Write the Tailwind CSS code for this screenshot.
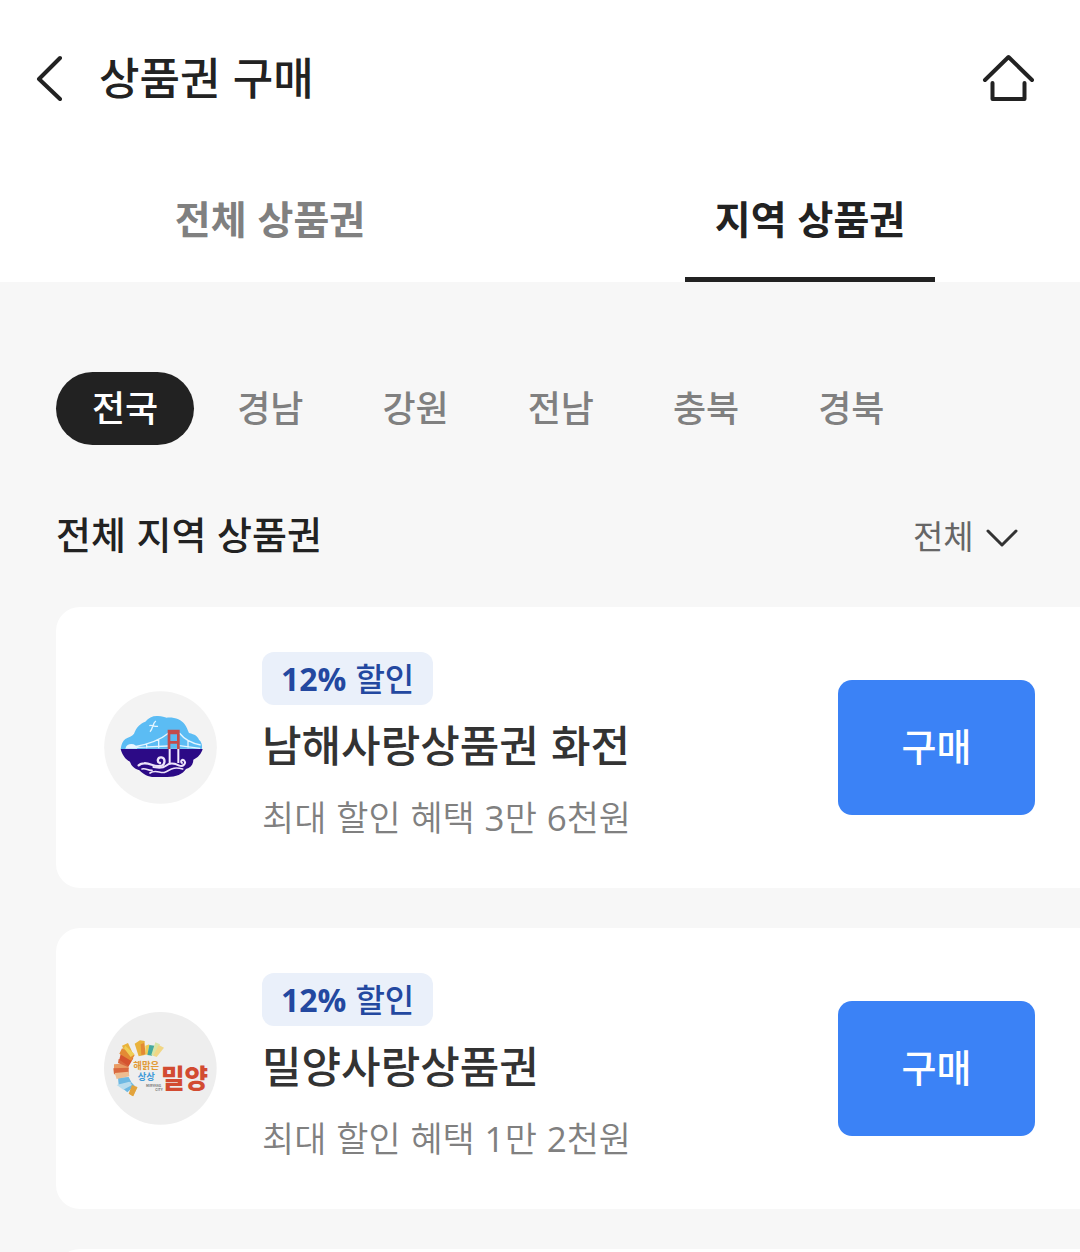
<!DOCTYPE html>
<html lang="ko">
    <head>
        <meta charset="utf-8" />
        <meta name="viewport" content="width=device-width, initial-scale=1" />
        <title>상품권 구매</title>
        <script src="https://cdn.jsdelivr.net/npm/@tailwindcss/browser@4"></script>
    </head>
    <body class="h-screen overflow-hidden bg-[#f7f7f7] font-['Noto_Sans_CJK_KR',sans-serif] text-[#222]">
        <header class="bg-white">
            <div class="flex items-center justify-between pt-10 pr-[45px] pl-9">
                <div class="flex items-center gap-[35px]">
                    <button type="button" aria-label="뒤로">
                        <svg class="h-[46px] w-7" viewBox="0 0 28 46" fill="none" stroke="#222" stroke-width="4" stroke-linecap="round" stroke-linejoin="round">
                            <path d="M24 3 3 24l21 20" />
                        </svg>
                    </button>
                    <h1 class="pb-1 text-[44px] leading-[72px] font-medium">상품권 구매</h1>
                </div>
                <a href="#" aria-label="홈">
                    <svg class="h-12 w-[54px]" viewBox="0 0 54 48" fill="none" stroke="#222" stroke-width="4" stroke-linecap="round" stroke-linejoin="round">
                        <path d="M4 26 27.500 3 51 26" />
                        <path d="M11.500 29v16h32V29" />
                    </svg>
                </a>
            </div>
            <nav class="grid grid-cols-2 pt-[41px]">
                <a href="#" class="flex justify-center text-[39px] font-bold text-[#808080]">
                    <span class="h-[125px] w-[250px] border-b-[5px] border-transparent text-center leading-[120px]">전체 상품권</span>
                </a>
                <a href="#" aria-current="page" class="flex justify-center text-[39px] font-bold">
                    <span class="h-[125px] w-[250px] border-b-[5px] border-[#222] text-center leading-[120px]">지역 상품권</span>
                </a>
            </nav>
        </header>

        <main class="pt-[90px] pl-14">
            <div class="flex gap-[7px] text-[36px] leading-[69px] font-medium text-[#808080]">
                <button type="button" class="rounded-full bg-[#222] px-9 pb-1 text-white">전국</button>
                <button type="button" class="rounded-full px-9 pb-1">경남</button>
                <button type="button" class="rounded-full px-9 pb-1">강원</button>
                <button type="button" class="rounded-full px-9 pb-1">전남</button>
                <button type="button" class="rounded-full px-9 pb-1">충북</button>
                <button type="button" class="rounded-full px-9 pb-1">경북</button>
            </div>

            <div class="flex items-center justify-between pt-[60px] pr-[62px] pb-[42px]">
                <h2 class="pb-1 text-[38px] leading-[56px] font-medium">전체 지역 상품권</h2>
                <div class="relative">
                    <select aria-label="정렬" class="w-[105px] appearance-none bg-transparent text-[33px] leading-[60px] text-[#666]">
                        <option>전체</option>
                    </select>
                    <svg class="pointer-events-none absolute top-[23px] right-0 h-5 w-8" viewBox="0 0 32 20" fill="none" stroke="#333" stroke-width="3" stroke-linecap="round" stroke-linejoin="round">
                        <path d="M2 3 16 17 30 3" />
                    </svg>
                </div>
            </div>

            <ul class="flex flex-col gap-10">
                <li class="flex items-center rounded-l-3xl bg-white pr-[45px] pl-12">
                    <svg class="size-[113px] shrink-0" viewBox="12 20 339 339">
                        <circle cx="181.500" cy="189.500" r="169" fill="#f3f3f3" />
                        <path fill="#5bbcf4" d="M62 194c2-14 6-24 14-30 10-6 20-8 26-16 8-20 18-30 34-36 10-12 22-18 38-17 12 1 20 4 26 5 24-2 44 6 54 20 6 8 8 16 13 26 18 4 26 10 30 20 8 6 10 16 9 27z" />
                        <path fill="#2c0a86" d="M62 194h246c-4 14-14 26-28 32 0 14-8 24-22 28-10 16-30 24-56 24h-46c-18-2-30-12-38-20-18-6-24-14-28-26-14-6-24-22-28-38z" />
                        <g fill="none" stroke="#e4f5ff" stroke-width="4">
                            <path d="M100 188Q170 176 206 146M238 146q22 28 64 36M110 189l94-4M238 184l62 8M176 166v26M140 180v12M264 170v22" />
                            <path d="M168 110c-10 4-8 22-18 32M148 124c8-4 14 4 26 2" />
                        </g>
                        <path fill="#e9f6ff" d="M76 193c2-10 10-14 18-14 10 0 16 6 18 14z" />
                        <path fill="none" stroke="#c34c4b" stroke-width="8" d="M207 194v-54h28v54M207 146h28M207 174h28" />
                        <path fill="none" stroke="#f5edff" stroke-width="6" d="M209 194v42M235 194v42" />
                        <g fill="none" stroke="#ede3fa" stroke-width="5" stroke-linecap="round">
                            <path stroke-width="7" d="M180 236c-10-2-8-18 4-17 14 2 12 26-4 26-18 4-30-10-48-8-8 0-12 2-16 6" />
                            <path stroke-width="6" d="M246 236c-6-4 0-12 6-8 8 8-2 20-14 16-16-8-30-8-40 0-12 10-24 6-38 4" />
                            <path d="M126 254c12-4 18 6 30 4M150 266c18-12 30 2 44-2 18-8 26-18 54-10" />
                        </g>
                    </svg>
                    <div class="min-w-0 flex-1 pt-[45px] pb-[41px] pl-[45px]">
                        <p class="w-fit rounded-xl bg-[#eaf0fa] px-[19px] pb-0.5 text-[32px] leading-[51px] font-medium text-[#2348a0]"><strong class="font-['Open_Sans'] leading-none font-bold">12%</strong> 할인</p>
                        <h3 class="pb-1 text-[43px] leading-[76px] font-medium text-[#333]">남해사랑상품권 화전</h3>
                        <p class="text-[35px] leading-[62px] font-[350] text-[#808080]">최대 할인 혜택 <span class="font-['Open_Sans'] leading-none font-normal">3</span>만 <span class="font-['Open_Sans'] leading-none font-normal">6</span>천원</p>
                    </div>
                    <button type="button" class="h-[135px] w-[197px] rounded-[14px] bg-[#3b82f6] pb-1.5 text-[38px] font-medium text-white">구매</button>
                </li>

                <li class="flex items-center rounded-l-3xl bg-white pr-[45px] pl-12">
                    <svg class="size-[113px] shrink-0" viewBox="12 17 339 339">
                        <circle cx="181" cy="186" r="169" fill="#eee" />
                        <!-- sun rays -->
                        <path fill="#e9b23c" d="M112 242 88 262 98 270 112 244zM66 118l18-8 18 38-18 14zM104 112l16-10 14 2v42l-18 4z" />
                        <path fill="#6db9e3" d="M54 214l32-2 8 16-38 8zM70 248l24-20 10 10-22 20z" />
                        <path fill="#b8dced" d="M50 236l38-10 8 10-26 14z" />
                        <path fill="#e99b63" d="M42 174l44-4v18l-44 4z" />
                        <path fill="#d9693f" d="M40 186l46-2v18l-44 2zM56 158l34 8-6 16-30-12z" />
                        <path fill="#edbd91" d="M44 200l42-4 2 14-38 8z" />
                        <path fill="#d5532f" d="M62 142l38 14-14 24-28-20z" />
                        <path fill="#e38a35" d="M66 126l38 20-10 18-36-22zM122 114l10-4 6 34-14 2z" />
                        <path fill="#e2a33c" d="M96 236l16 6-12 28-14-8z" />
                        <path fill="#f0ce55" d="M76 118l28 26-12 8-20-26zM136 118l12-4-4 30-8 2z" />
                        <path fill="#45a99f" d="M148 116l16 2-8 30-14-2z" />
                        <path fill="#d8e4a4" d="M166 108l14 6-16 36-10-4z" />
                        <path fill="#f1d684" d="M176 116l16 8-22 28-10-4z" />
                        <g class="font-['Noto_Sans_CJK_KR',sans-serif] font-bold">
                            <text x="100" y="188" font-size="28" fill="#e29a35">해맑은</text>
                            <text x="113" y="220" font-size="28" fill="#3f9ad8">상상</text>
                            <text x="183" y="246" font-size="77" font-weight="900" fill="#d24b31">밀양</text>
                            <text x="138" y="242" font-size="10" fill="#777">MIRYANG</text>
                            <text x="166" y="255" font-size="10" fill="#777">CITY</text>
                        </g>
                    </svg>
                    <div class="min-w-0 flex-1 pt-[45px] pb-[41px] pl-[45px]">
                        <p class="w-fit rounded-xl bg-[#eaf0fa] px-[19px] pb-0.5 text-[32px] leading-[51px] font-medium text-[#2348a0]"><strong class="font-['Open_Sans'] leading-none font-bold">12%</strong> 할인</p>
                        <h3 class="pb-1 text-[43px] leading-[76px] font-medium text-[#333]">밀양사랑상품권</h3>
                        <p class="text-[35px] leading-[62px] font-[350] text-[#808080]">최대 할인 혜택 <span class="font-['Open_Sans'] leading-none font-normal">1</span>만 <span class="font-['Open_Sans'] leading-none font-normal">2</span>천원</p>
                    </div>
                    <button type="button" class="h-[135px] w-[197px] rounded-[14px] bg-[#3b82f6] pb-1.5 text-[38px] font-medium text-white">구매</button>
                </li>

                <li class="h-[281px] rounded-l-3xl bg-white"></li>
            </ul>
        </main>
    </body>
</html>
